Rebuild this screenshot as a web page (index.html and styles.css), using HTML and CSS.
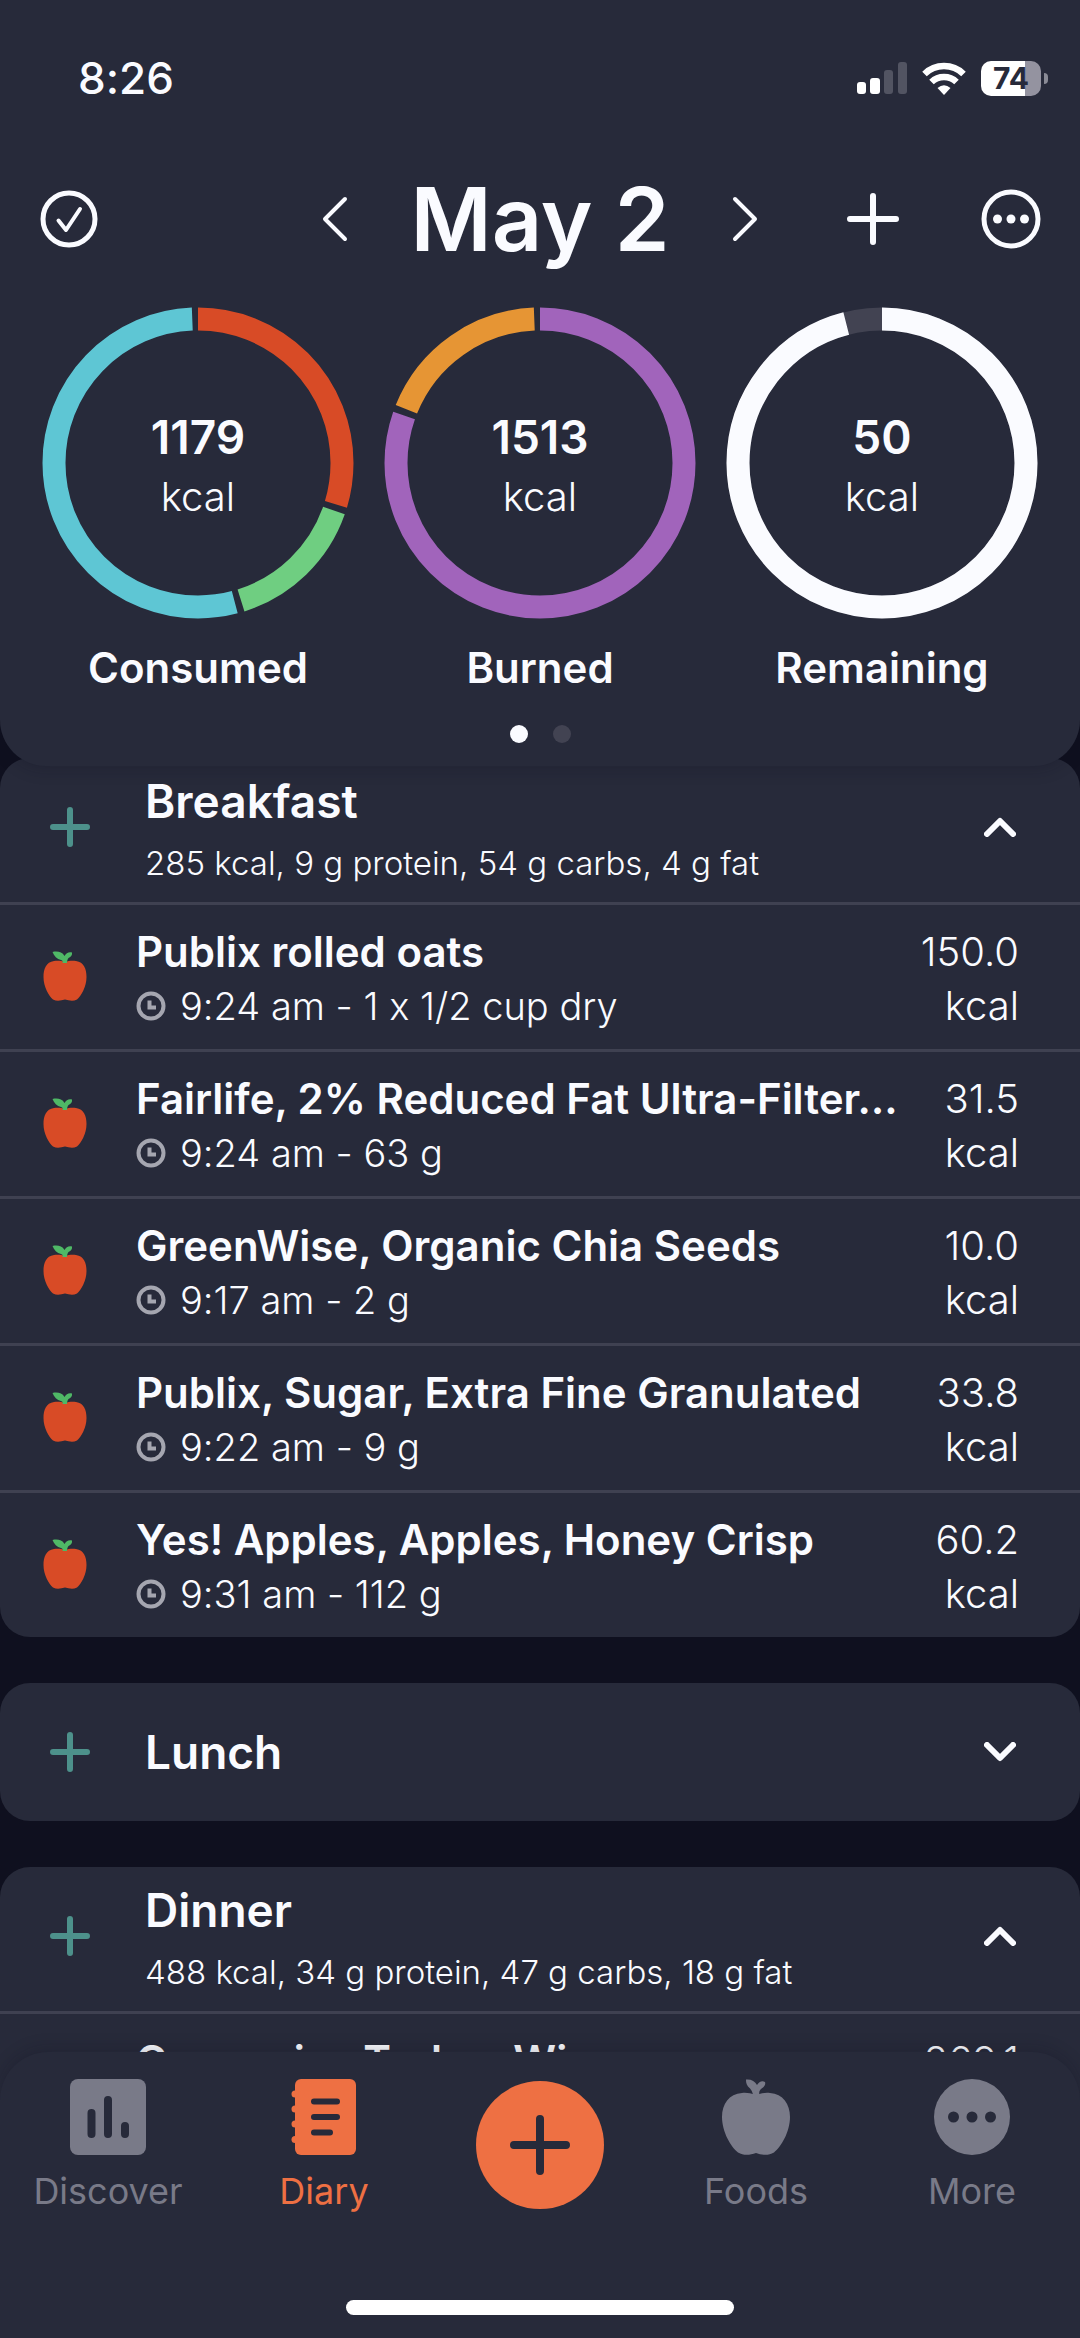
FILE: index.html
```html
<!DOCTYPE html>
<html lang="en">
<head>
    <meta charset="UTF-8">
    <meta name="viewport" content="width=device-width, initial-scale=1">
    <title>Diary</title>
    <link rel="stylesheet" href="styles.css">
</head>
<body>
<!-- shared icons -->
<svg class="sprite" width="0" height="0" aria-hidden="true">
    <symbol id="apple" viewBox="0 0 68 76">
        <path class="fruit" d="M34 16C28 14 24 13.500 20 14C7 15 0 25 0 38C0 53 9 68 16 73.500C22 77 28 76 34 74C40 76 46 77 52 73.500C59 68 68 53 68 38C68 25 61 15 48 14C44 13.500 40 14 34 16Z"/>
        <path class="leaf" d="M31 17C31 13 29 10 26 7.500C24 5 24 2 24 .5C29 0 33 2 35 6C37 3 40 1 43 3C44 6 42 8 39 10C37 12 37 14 37.500 17Z"/>
    </symbol>
    <symbol id="apple-color" viewBox="0 0 44 50">
        <path fill="#d84b26" d="M22 11C18 9.500 14 9.500 11 10C3 11 .5 18 .5 26C.5 36 6 45 10 48.500C14 50.500 18 49.500 22 48.500C26 49.500 30 50.500 34 48.500C38 45 43.500 36 43.500 26C43.500 18 41 11 33 10C30 9.500 26 9.500 22 11Z"/>
        <path fill="#4fb866" d="M19.500 12C20 10 19.500 9.500 18 9C14 8 11 5 9.500 1C14 0 19 .5 21.500 5C23 2 26 .5 29 1.500C29.500 4 28 6 25.500 7C24.500 8 24 10 24 12Z"/>
    </symbol>
    <symbol id="plus" viewBox="0 0 40 40">
        <path d="M20 3V37M3 20H37" fill="none" stroke="currentColor" stroke-width="6" stroke-linecap="round"/>
    </symbol>
    <symbol id="chevron" viewBox="0 0 32 20">
        <path d="M3 17L16 4L29 17" fill="none" stroke="currentColor" stroke-width="6" stroke-linecap="round" stroke-linejoin="round"/>
    </symbol>
    <symbol id="clock" viewBox="0 0 30 30">
        <circle cx="15" cy="15" r="12.500" fill="none" stroke="currentColor" stroke-width="4"/>
        <path d="M13.500 9.500V16.500H20" fill="none" stroke="currentColor" stroke-width="4"/>
    </symbol>
</svg>

<div class="app">
    <header class="summary">
        <div class="status">
            <span class="time">8:26</span>
            <div class="status-icons">
                <svg width="50" height="32" viewBox="0 0 50 32">
                    <rect x="0" y="20" width="9" height="12" rx="3" fill="#fff"/>
                    <rect x="13" y="16" width="10" height="16" rx="3" fill="#fff"/>
                    <rect x="27" y="8" width="9" height="24" rx="3" fill="#525462"/>
                    <rect x="41" y="0" width="9" height="32" rx="3" fill="#525462"/>
                </svg>
                <svg width="44" height="33" viewBox="0 0 44 33">
                    <path d="M2.500 12A28 28 0 0 1 41.500 12" fill="none" stroke="#fff" stroke-width="6.500"/>
                    <path d="M9.500 20A18 18 0 0 1 34.500 20" fill="none" stroke="#fff" stroke-width="6.500"/>
                    <path d="M15.500 26Q22 20.500 28.500 26L22 33Z" fill="#fff"/>
                </svg>
                <span class="battery"><span class="battery-level">74</span></span>
            </div>
        </div>

        <div class="topbar">
            <button class="icon-btn" aria-label="Complete day">
                <svg width="60" height="60" viewBox="0 0 60 60" fill="none" stroke="currentColor" stroke-linecap="round" stroke-linejoin="round">
                    <circle cx="30" cy="30" r="26" stroke-width="5"/>
                    <path d="M19.500 31.500L27 41L41 20" stroke-width="4"/>
                </svg>
            </button>
            <div class="day">
                <button class="icon-btn" aria-label="Previous day">
                    <svg width="26" height="46" viewBox="0 0 26 46" fill="none" stroke="currentColor" stroke-width="4" stroke-linecap="round" stroke-linejoin="round"><path d="M23 3L3 23L23 43"/></svg>
                </button>
                <h1>May 2</h1>
                <button class="icon-btn" aria-label="Next day">
                    <svg width="26" height="46" viewBox="0 0 26 46" fill="none" stroke="currentColor" stroke-width="4" stroke-linecap="round" stroke-linejoin="round"><path d="M3 3L23 23L3 43"/></svg>
                </button>
            </div>
            <div class="actions">
                <button class="icon-btn" aria-label="Add">
                    <svg width="60" height="60" viewBox="0 0 60 60" fill="none" stroke="currentColor" stroke-width="6" stroke-linecap="round"><path d="M30 7V53M7 30H53"/></svg>
                </button>
                <button class="icon-btn" aria-label="Options">
                    <svg width="60" height="60" viewBox="0 0 60 60">
                        <circle cx="30" cy="30" r="27" fill="none" stroke="currentColor" stroke-width="5"/>
                        <g fill="currentColor"><circle cx="16.500" cy="30" r="4.500"/><circle cx="30" cy="30" r="4.500"/><circle cx="43.500" cy="30" r="4.500"/></g>
                    </svg>
                </button>
            </div>
        </div>

        <div class="rings">
            <section class="ring">
                <svg class="donut" viewBox="0 0 312 312">
                    <circle class="arc" stroke="#d84b26" pathLength="360" stroke-dasharray="106.700 360"/>
                    <circle class="arc" stroke="#6fce81" pathLength="360" stroke-dasharray="53.300 360" stroke-dashoffset="-109.300"/>
                    <circle class="arc" stroke="#5ec6d4" pathLength="360" stroke-dasharray="192.500 360" stroke-dashoffset="-165.200"/>
                </svg>
                <p class="amount"><strong>1179</strong>kcal</p>
                <h2>Consumed</h2>
            </section>
            <section class="ring">
                <svg class="donut" viewBox="0 0 312 312">
                    <circle class="arc" stroke="#a164bb" pathLength="360" stroke-dasharray="289.300 360"/>
                    <circle class="arc" stroke="#e69534" pathLength="360" stroke-dasharray="65.800 360" stroke-dashoffset="-291.900"/>
                </svg>
                <p class="amount"><strong>1513</strong>kcal</p>
                <h2>Burned</h2>
            </section>
            <section class="ring">
                <svg class="donut" viewBox="0 0 312 312">
                    <circle class="arc" stroke="#424352"/>
                    <circle class="arc" stroke="#fafbff" pathLength="360" stroke-dasharray="345.600 360"/>
                </svg>
                <p class="amount"><strong>50</strong>kcal</p>
                <h2>Remaining</h2>
            </section>
        </div>
        <div class="dots"><span class="dot on"></span><span class="dot"></span></div>
    </header>

    <main class="meals">
        <section class="meal">
            <div class="meal-head open">
                <button class="icon-btn add" aria-label="Add to Breakfast"><svg width="40" height="40"><use href="#plus"/></svg></button>
                <div class="meal-text">
                    <h2>Breakfast</h2>
                    <p>285 kcal, 9 g protein, 54 g carbs, 4 g fat</p>
                </div>
                <button class="icon-btn toggle" aria-label="Collapse"><svg width="32" height="20"><use href="#chevron"/></svg></button>
            </div>
            <ul class="foods">
                <li class="food">
                    <svg class="apple" width="44" height="50"><use href="#apple-color"/></svg>
                    <div class="food-text">
                        <h3>Publix rolled oats</h3>
                        <p><svg class="clock" width="30" height="30"><use href="#clock"/></svg>9:24 am - 1 x 1/2 cup dry</p>
                    </div>
                    <p class="kcal">150.0<br>kcal</p>
                </li>
                <li class="food">
                    <svg class="apple" width="44" height="50"><use href="#apple-color"/></svg>
                    <div class="food-text">
                        <h3>Fairlife, 2% Reduced Fat Ultra-Filter…</h3>
                        <p><svg class="clock" width="30" height="30"><use href="#clock"/></svg>9:24 am - 63 g</p>
                    </div>
                    <p class="kcal">31.5<br>kcal</p>
                </li>
                <li class="food">
                    <svg class="apple" width="44" height="50"><use href="#apple-color"/></svg>
                    <div class="food-text">
                        <h3>GreenWise, Organic Chia Seeds</h3>
                        <p><svg class="clock" width="30" height="30"><use href="#clock"/></svg>9:17 am - 2 g</p>
                    </div>
                    <p class="kcal">10.0<br>kcal</p>
                </li>
                <li class="food">
                    <svg class="apple" width="44" height="50"><use href="#apple-color"/></svg>
                    <div class="food-text">
                        <h3>Publix, Sugar, Extra Fine Granulated</h3>
                        <p><svg class="clock" width="30" height="30"><use href="#clock"/></svg>9:22 am - 9 g</p>
                    </div>
                    <p class="kcal">33.8<br>kcal</p>
                </li>
                <li class="food">
                    <svg class="apple" width="44" height="50"><use href="#apple-color"/></svg>
                    <div class="food-text">
                        <h3>Yes! Apples, Apples, Honey Crisp</h3>
                        <p><svg class="clock" width="30" height="30"><use href="#clock"/></svg>9:31 am - 112 g</p>
                    </div>
                    <p class="kcal">60.2<br>kcal</p>
                </li>
            </ul>
        </section>

        <section class="meal">
            <div class="meal-head">
                <button class="icon-btn add" aria-label="Add to Lunch"><svg width="40" height="40"><use href="#plus"/></svg></button>
                <div class="meal-text">
                    <h2>Lunch</h2>
                </div>
                <button class="icon-btn toggle closed" aria-label="Expand"><svg width="32" height="20"><use href="#chevron"/></svg></button>
            </div>
        </section>

        <section class="meal">
            <div class="meal-head open">
                <button class="icon-btn add" aria-label="Add to Dinner"><svg width="40" height="40"><use href="#plus"/></svg></button>
                <div class="meal-text">
                    <h2>Dinner</h2>
                    <p>488 kcal, 34 g protein, 47 g carbs, 18 g fat</p>
                </div>
                <button class="icon-btn toggle" aria-label="Collapse"><svg width="32" height="20"><use href="#chevron"/></svg></button>
            </div>
            <ul class="foods">
                <li class="food">
                    <svg class="apple" width="44" height="50"><use href="#apple-color"/></svg>
                    <div class="food-text">
                        <h3>Greenwise Turkey Wings</h3>
                    </div>
                    <p class="kcal">269.1<br>kcal</p>
                </li>
            </ul>
        </section>
    </main>

    <footer class="tabbar">
        <nav class="tabs">
            <a class="tab" href="#discover">
                <svg width="76" height="76" viewBox="0 0 76 76">
                    <rect width="76" height="76" rx="8" fill="currentColor"/>
                    <path d="M21.500 34V55M38 21V55M55 47V55" stroke="#272a3a" stroke-width="8" stroke-linecap="round"/>
                </svg>
                Discover
            </a>
            <a class="tab active" href="#diary">
                <svg width="76" height="76" viewBox="0 0 76 76">
                    <rect x="9" width="61" height="76" rx="6" fill="currentColor"/>
                    <g fill="currentColor"><circle cx="9" cy="15" r="3.500"/><circle cx="9" cy="30" r="3.500"/><circle cx="9" cy="45" r="3.500"/><circle cx="9" cy="60.500" r="3.500"/></g>
                    <path d="M28 22.500H51M28 38H51M28 53.500H44" stroke="#272a3a" stroke-width="6" stroke-linecap="round"/>
                </svg>
                Diary
            </a>
            <button class="fab" aria-label="Add entry">
                <svg width="62" height="62" viewBox="0 0 62 62"><path d="M31 5V57M5 31H57" stroke="#272a3a" stroke-width="8" stroke-linecap="round"/></svg>
            </button>
            <a class="tab" href="#foods">
                <svg class="apple-tab" width="68" height="76"><use href="#apple"/></svg>
                Foods
            </a>
            <a class="tab" href="#more">
                <svg width="76" height="76" viewBox="0 0 76 76">
                    <circle cx="38" cy="38" r="38" fill="currentColor"/>
                    <g fill="#272a3a"><circle cx="19.500" cy="38" r="5.500"/><circle cx="38" cy="38" r="5.500"/><circle cx="56.500" cy="38" r="5.500"/></g>
                </svg>
                More
            </a>
        </nav>
        <div class="home-bar"></div>
    </footer>
</div>
</body>
</html>
```
FILE: styles.css
```css
* {
    box-sizing: border-box;
    margin: 0;
    padding: 0;
}

body {
    background: #0f101f;
    color: #fafbff;
    font-family: Inter, "Liberation Sans", sans-serif;
    font-feature-settings: "calt" 0;
    font-size: 40px;
    font-weight: 300;
}

.sprite {
    position: absolute;
}

svg {
    display: block;
    flex: none;
}

.app {
    display: flex;
    flex-direction: column;
    height: 100vh;
    overflow: hidden;
}

.icon-btn {
    display: flex;
    align-items: center;
    justify-content: center;
    border: 0;
    background: none;
    color: inherit;
}

/* header */
.summary {
    position: relative;
    z-index: 1;
    flex: none;
    padding-bottom: 23px;
    border-radius: 0 0 46px 46px;
    background: #272a3a;
    box-shadow: 0 4px 16px rgba(15, 16, 31, .2);
}

.status {
    display: flex;
    align-items: center;
    justify-content: space-between;
    height: 156px;
    padding: 0 39px 0 78px;
}

.time {
    font-size: 44px;
    font-weight: 500;
}

.status-icons {
    display: flex;
    align-items: center;
    gap: 15px;
}

.battery {
    position: relative;
    width: 60px;
    height: 35px;
    border-radius: 10px;
    background: linear-gradient(90deg, #fff 44px, #9493a0 44px);
    color: #272a3a;
}

.battery::after {
    content: "";
    position: absolute;
    top: 12px;
    right: -7px;
    width: 4px;
    height: 11px;
    border-radius: 0 4px 4px 0;
    background: #8a8b96;
}

.battery-level {
    display: block;
    font-size: 30px;
    font-weight: 700;
    line-height: 35px;
    text-align: center;
}

.topbar {
    display: grid;
    grid-template-columns: 1fr auto 1fr;
    align-items: center;
    height: 126px;
    padding: 0 39px;
}

.topbar > .icon-btn {
    justify-self: start;
}

.day {
    display: flex;
    align-items: center;
    gap: 62px;
}

.day h1 {
    font-size: 88px;
    font-weight: 600;
    line-height: 100px;
}

.actions {
    display: flex;
    justify-content: flex-end;
    gap: 78px;
}

.rings {
    display: grid;
    grid-template-columns: repeat(3, 1fr);
    padding: 25px 27px 0;
}

.ring {
    display: grid;
    grid-template-rows: auto 50px;
    row-gap: 24px;
    justify-items: center;
}

.donut {
    grid-area: 1 / 1;
    width: 312px;
    height: 312px;
    transform: rotate(-90deg);
}

.arc {
    cx: 156px;
    cy: 156px;
    r: 144px;
    fill: none;
    stroke-width: 23px;
}

.amount {
    grid-area: 1 / 1;
    align-self: center;
    padding-top: 8px;
    line-height: 60px;
    text-align: center;
}

.amount strong {
    display: block;
    font-size: 46px;
    font-weight: 600;
}

.ring h2 {
    font-size: 42px;
    font-weight: 600;
    line-height: 50px;
}

.dots {
    display: flex;
    justify-content: center;
    gap: 25px;
    margin-top: 32px;
}

.dot {
    width: 18px;
    height: 18px;
    border-radius: 50%;
    background: #424352;
}

.dot.on {
    background: #fafbff;
}

/* meals */
.meals {
    flex: 1;
    display: flex;
    flex-direction: column;
    gap: 46px;
    min-height: 0;
    margin-top: -8px;
    overflow: hidden;
}

.meal {
    flex: none;
    border-radius: 30px;
    background: #272a3a;
}

.meal-head {
    display: flex;
    align-items: center;
    min-height: 138px;
    padding: 0 64px 0 50px;
}

.meal-head.open {
    padding-bottom: 6px;
    border-bottom: 3px solid #3f4151;
}

.add {
    color: #4d918b;
}

.meal-text {
    flex: 1;
    margin: 13px 0 13px 55px;
}

.meal-text h2 {
    font-size: 46px;
    font-weight: 600;
    line-height: 60px;
}

.meal-text p {
    margin-top: 12px;
    font-size: 33px;
    line-height: 40px;
}

.toggle.closed svg {
    transform: scaleY(-1);
}

.foods {
    list-style: none;
}

.food {
    display: flex;
    align-items: center;
    min-height: 144px;
    padding: 20px 61px 16px 43px;
    line-height: 54px;
}

.food + .food {
    border-top: 3px solid #3f4151;
}

.apple {
    margin-bottom: 6px;
}

.food-text {
    flex: 1;
    align-self: flex-start;
    min-width: 0;
    margin: 0 16px 0 49px;
}

.food-text h3 {
    overflow: hidden;
    font-size: 42px;
    font-weight: 600;
    text-overflow: ellipsis;
    white-space: nowrap;
}

.food-text p {
    display: flex;
    align-items: center;
    gap: 14px;
    font-size: 38px;
}

.clock {
    color: #a5a6b0;
}

.kcal {
    min-width: 98px;
    text-align: right;
}

/* bottom tabs */
.tabbar {
    position: relative;
    flex: none;
    margin-top: -48px;
    padding: 27px 0 23px;
    border-radius: 48px 48px 0 0;
    background: #272a3a;
    box-shadow: 0 -4px 16px rgba(15, 16, 31, .2);
}

.tabs {
    display: grid;
    grid-template-columns: repeat(5, 1fr);
    justify-items: center;
    align-items: start;
}

.tab {
    display: flex;
    flex-direction: column;
    align-items: center;
    gap: 14px;
    color: #797a88;
    font-size: 36px;
    font-weight: 400;
    line-height: 44px;
    text-decoration: none;
}

.tab.active {
    color: #ee7043;
}

.apple-tab {
    fill: currentColor;
}

.fab {
    display: flex;
    align-items: center;
    justify-content: center;
    width: 128px;
    height: 128px;
    margin-top: 2px;
    border: 0;
    border-radius: 50%;
    background: #ee7043;
}

.home-bar {
    width: 36%;
    height: 15px;
    margin: 87px auto 0;
    border-radius: 8px;
    background: #fff;
}
```
